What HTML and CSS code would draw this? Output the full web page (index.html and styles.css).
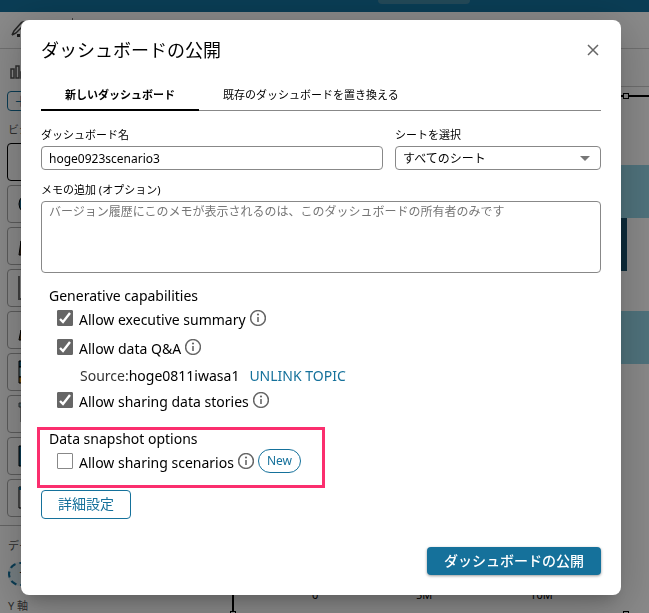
FILE: index.html
```html
<!DOCTYPE html>
<html lang="ja">
  <head>
    <meta charset="UTF-8" />
    <meta name="viewport" content="width=device-width, initial-scale=1.0" />
    <title>ダッシュボードの公開</title>
    <link rel="stylesheet" href="styles.css">
  </head>
  <body>
    <svg class="symbols" aria-hidden="true">
      <symbol id="info" viewBox="0 0 16 16">
        <circle cx="8" cy="8" r="7.4" fill="none" stroke="currentColor" stroke-width="1.5" />
        <path d="M8 7v5" stroke="currentColor" stroke-width="1.6" />
        <circle cx="8" cy="4.5" r="1.1" fill="currentColor" />
      </symbol>
    </svg>

    <div class="app">
      <header class="topbar"><div class="search"></div></header>
      <div class="toolbar">
        <svg class="pen" viewBox="0 0 18 18">
          <path d="M1 14l2-4 7-8q2-2 4 0M1 14l4-2 7-7" fill="none" stroke="#444" stroke-width="1.5" />
          <rect x="6" y="13" width="3" height="3" fill="#333" />
        </svg>
        <span class="separator"></span>
      </div>
      <div class="workspace">
        <aside class="sidebar">
          <svg class="bars" viewBox="0 0 18 14">
            <path d="M2 4h3v9H2z M7 1h3v12H7z M12 7h3v6h-3z" fill="none" stroke="#555" stroke-width="1.5" />
          </svg>
          <div class="add">＋</div>
          <p class="caption">ビジ</p>
          <div class="tiles">
            <div class="tile current"></div>
            <div class="tile"><svg viewBox="0 0 20 24"><circle cx="11" cy="12" r="10" fill="#15719b" stroke="#000" /></svg></div>
            <div class="tile"><svg viewBox="0 0 20 24"><path d="M1 21l2-14v14z" fill="#946337" stroke="#000" /></svg></div>
            <div class="tile"><svg viewBox="0 0 20 24"><path d="M1 0v23h18" fill="none" stroke="#777" stroke-width="2" /></svg></div>
            <div class="tile"><svg viewBox="0 0 20 24"><path d="M1 22l2-10v10z" fill="#d48822" stroke="#000" /></svg></div>
            <div class="tile"><svg viewBox="0 0 20 24"><path d="M1 1h18v6H1z" fill="#1a779f" stroke="#000" /><path d="M1 7h18v10H1z" fill="#ace0ee" stroke="#000" /><path d="M1 17h18v6H1z" fill="#e49b24" stroke="#000" /></svg></div>
            <div class="tile"><svg viewBox="0 0 20 24"><path d="M1 1h5v4H1z M3 5v15" fill="#8bbdcb" stroke="#555" /></svg></div>
            <div class="tile"><svg viewBox="0 0 20 24"><path d="M1 2h18v20H1z" fill="#136c98" stroke="#000" /></svg></div>
            <div class="tile"><svg viewBox="0 0 20 24"><path d="M1 1h18v21H1z" fill="none" stroke="#000" /><path d="M1 1h18v3H1z" fill="#136c98" /></svg></div>
          </div>
          <div class="fields">
            <p class="caption">デー</p>
            <div class="pill">デ</div>
            <p class="caption">Y 軸</p>
          </div>
        </aside>
        <section class="sheet">
          <div class="visual">
            <span class="handle top"></span>
            <div class="bar"></div>
            <div class="bar dark"></div>
            <div class="bar next"></div>
            <div class="axis"><span>0</span><span>5M</span><span>10M</span><span>15M</span></div>
            <span class="handle bottom"></span>
            <span class="handle corner"></span>
          </div>
        </section>
      </div>
    </div>

    <div class="overlay">
      <form class="dialog" role="dialog" aria-labelledby="title">
        <div class="dialog-head">
          <h1 id="title">ダッシュボードの公開</h1>
          <button type="button" class="close" aria-label="閉じる">
            <svg viewBox="0 0 12 12"><path d="M1 1l10 10M11 1L1 11" stroke="#666" stroke-width="1.5" /></svg>
          </button>
        </div>

        <nav class="tabs" role="tablist">
          <button type="button" role="tab" aria-selected="true" class="tab selected">新しいダッシュボード</button>
          <button type="button" role="tab" aria-selected="false" class="tab">既存のダッシュボードを置き換える</button>
        </nav>

        <div class="row">
          <div class="field name">
            <label for="name">ダッシュボード名</label>
            <input type="text" id="name" value="hoge0923scenario3" />
          </div>
          <div class="field sheets">
            <label for="sheets">シートを選択</label>
            <select id="sheets">
              <option>すべてのシート</option>
            </select>
          </div>
        </div>

        <div class="field memo">
          <label for="memo">メモの追加 (オプション)</label>
          <textarea id="memo" placeholder="バージョン履歴にこのメモが表示されるのは、このダッシュボードの所有者のみです"></textarea>
        </div>

        <section class="options">
          <h2>Generative capabilities</h2>
          <div class="option">
            <input type="checkbox" id="summary" checked />
            <label for="summary">Allow executive summary</label>
            <svg class="info"><use href="#info" /></svg>
          </div>
          <div class="option">
            <input type="checkbox" id="qa" checked />
            <label for="qa">Allow data Q&amp;A</label>
            <svg class="info"><use href="#info" /></svg>
          </div>
          <p class="source"><span>Source:</span><b>hoge0811iwasa1</b><a href="#">UNLINK TOPIC</a></p>
          <div class="option">
            <input type="checkbox" id="stories" checked />
            <label for="stories">Allow sharing data stories</label>
            <svg class="info"><use href="#info" /></svg>
          </div>
        </section>

        <section class="options snapshot">
          <h2>Data snapshot options</h2>
          <div class="option">
            <input type="checkbox" id="scenarios" />
            <label for="scenarios">Allow sharing scenarios</label>
            <svg class="info"><use href="#info" /></svg>
            <span class="new">New</span>
          </div>
        </section>

        <button type="button" class="advanced">詳細設定</button>

        <div class="actions">
          <button type="submit" class="publish">ダッシュボードの公開</button>
        </div>
      </form>
    </div>
  </body>
</html>
```
FILE: styles.css
```css
* {
  box-sizing: border-box;
}

body {
  margin: 0;
  color: #000;
  font-family: "Noto Sans", "Noto Sans CJK JP", sans-serif;
  font-size: 14px;
}

h1,
h2,
p {
  margin: 0;
  font-weight: 400;
}

button,
input,
select,
textarea {
  margin: 0;
  font-family: inherit;
  color: inherit;
}

.symbols {
  position: absolute;
  width: 0;
  height: 0;
}

/* page behind the dialog */
.app {
  display: flex;
  flex-direction: column;
  height: 100vh;
  overflow: hidden;
  background: #fff;
}

.topbar {
  display: flex;
  justify-content: center;
  flex: none;
  height: 12px;
  padding-left: 198px;
  background: #13719d;
}

.search {
  width: 92px;
  height: 4px;
  border-radius: 0 0 8px 8px;
  background: #4287a3;
}

.toolbar {
  display: flex;
  flex: none;
  gap: 43px;
  height: 37px;
  padding: 9px 11px;
  border-bottom: 1px solid #d0d0d0;
}

.pen {
  width: 18px;
  height: 18px;
}

.separator {
  width: 1px;
  height: 18px;
  margin-top: -3px;
  background: #777;
}

.workspace {
  display: flex;
  flex: 1;
  min-height: 0;
}

.sidebar {
  flex: none;
  width: 232px;
  padding-top: 16px;
}

.bars {
  display: block;
  width: 18px;
  height: 14px;
  margin-left: 9px;
}

.add {
  width: 80px;
  height: 20px;
  margin: 12px 0 0 7px;
  padding-left: 6px;
  border: 1px solid #13719d;
  border-radius: 4px;
  color: #13719d;
  line-height: 18px;
}

.caption {
  padding-left: 8px;
  color: #555;
  font-size: 11px;
  line-height: 16px;
}

.add + .caption {
  margin: 11px 0 5px;
}

.tiles {
  display: flex;
  flex-direction: column;
  gap: 4px;
  padding: 0 7px 8px;
  border-bottom: 1px solid #bbb;
}

.tile {
  display: flex;
  align-items: center;
  width: 40px;
  height: 38px;
  padding-left: 10px;
  border: 1px solid #aaa;
  border-radius: 4px;
}

.tile.current {
  border-color: #000;
}

.tile svg {
  width: 20px;
  height: 24px;
}

.fields {
  padding-top: 12px;
}

.pill {
  width: 80px;
  height: 24px;
  margin: 8px 0 12px 8px;
  padding-left: 9px;
  border: 2px dashed #13719d;
  border-radius: 12px;
  background: #dcecf3;
  font-size: 12px;
  line-height: 20px;
}

.sheet {
  flex: 1;
  min-width: 0;
  padding-top: 46px;
  background: linear-gradient(#ccc, #ccc) 0 37px / 100% 1px no-repeat;
}

.visual {
  position: relative;
  height: 518px;
  padding-top: 68px;
  border-top: 2px solid #000;
  border-left: 2px solid #000;
}

.bar {
  height: 53px;
  background: #94d5e7;
}

.bar.dark {
  width: calc(100% - 22px);
  background: #18516d;
}

.bar.next {
  margin-top: 40px;
}

.axis {
  display: flex;
  justify-content: space-between;
  margin: 223px -24px 0 0;
  padding-left: 78px;
  font-size: 11px;
  line-height: 16px;
}

.handle {
  position: absolute;
  width: 6px;
  height: 6px;
  border: 1px solid #000;
  background: #fff;
}

.handle.top {
  top: -4px;
  right: 20px;
}

.handle.bottom {
  bottom: -4px;
  left: -4px;
}

.handle.corner {
  right: 20px;
  bottom: -4px;
}

/* dialog */
.overlay {
  position: fixed;
  inset: 0;
  padding: 20px 28px 18px 21px;
  background: rgba(0, 0, 0, 0.46);
}

.dialog {
  display: flex;
  flex-direction: column;
  height: 100%;
  padding: 16px 20px 20px;
  border-radius: 8px;
  background: #fff;
  box-shadow: 0 11px 15px -7px rgba(0, 0, 0, 0.2), 0 9px 46px 8px rgba(0, 0, 0, 0.2);
}

.dialog-head {
  display: flex;
  align-items: center;
  justify-content: space-between;
  height: 28px;
}

h1 {
  font-size: 18px;
  line-height: 28px;
}

.close {
  display: flex;
  padding: 2px;
  border: 0;
  background: none;
}

.close svg {
  width: 12px;
  height: 12px;
}

.tabs {
  display: flex;
  height: 47px;
  padding-top: 14px;
  border-bottom: 1px solid #888;
}

.tab {
  height: 33px;
  padding: 0 24px;
  border: 0;
  border-bottom: 2px solid transparent;
  background: none;
  font-size: 11px;
}

.tab.selected {
  border-color: #000;
  font-weight: 700;
}

.row {
  display: flex;
  gap: 12px;
  margin-top: 16px;
}

.field {
  display: flex;
  flex-direction: column;
  gap: 3px;
}

.field label {
  font-size: 11px;
  line-height: 16px;
}

.field.name {
  flex: 1;
}

.field.sheets {
  width: 206px;
}

.field input,
.field select,
.field textarea {
  width: 100%;
  height: 24px;
  padding: 0 7px;
  border: 1px solid #888;
  border-radius: 4px;
  background: #fff;
  font-size: 12px;
}

.field select {
  appearance: none;
  background: #fff url("data:image/svg+xml,%3Csvg xmlns='http://www.w3.org/2000/svg' viewBox='0 0 10 5'%3E%3Cpath d='M0 0h10L5 5z' fill='%23777'/%3E%3C/svg%3E") right 10px center / 10px 5px no-repeat;
}

.field.memo {
  margin-top: 12px;
}

.field textarea {
  height: 72px;
  padding: 1px 7px;
  line-height: 18px;
  resize: none;
}

.field textarea::placeholder {
  color: #757575;
}

.options {
  margin-top: 13px;
  padding-left: 8px;
}

h2 {
  font-size: 14px;
  line-height: 20px;
}

.option {
  display: flex;
  align-items: center;
  height: 24px;
  padding-left: 8px;
}

.option + .option,
.option + .source {
  margin-top: 5px;
}

.option input {
  appearance: none;
  flex: none;
  width: 16px;
  height: 16px;
  margin-right: 6px;
  border: 1px solid #888;
  border-radius: 1px;
}

.option input:checked {
  border-color: #666;
  background: #666 url("data:image/svg+xml,%3Csvg xmlns='http://www.w3.org/2000/svg' viewBox='0 0 14 14'%3E%3Cpath d='M2 8l3 3 7-9' fill='none' stroke='white' stroke-width='2.4'/%3E%3C/svg%3E") center / 14px 14px no-repeat;
}

.option label {
  padding-top: 3px;
  line-height: 20px;
}

.info {
  width: 16px;
  height: 16px;
  margin-left: 4px;
  color: #666;
  overflow: visible;
}

.source {
  display: flex;
  padding-left: 31px;
  line-height: 24px;
}

.source span {
  color: #333;
}

.source b {
  font-weight: 400;
}

.source a {
  margin-left: 10px;
  color: #15719b;
  text-decoration: none;
}

.snapshot {
  position: relative;
  margin-top: 17px;
}

/* highlight frame around the section */
.snapshot::after {
  content: "";
  position: absolute;
  inset: -2px 276px -15px -4px;
  border: 3px solid #fb2e6e;
  pointer-events: none;
}

.new {
  height: 24px;
  margin-left: 4px;
  padding: 0 8px;
  border: 1px solid #15719b;
  border-radius: 12px;
  color: #15719b;
  font-size: 12px;
  line-height: 22px;
}

.advanced {
  align-self: flex-start;
  height: 29px;
  margin-top: 17px;
  padding: 0 16px 4px;
  border: 1px solid #15719b;
  border-radius: 4px;
  background: #fff;
  color: #15719b;
  font-size: 14px;
}

.actions {
  display: flex;
  justify-content: flex-end;
  margin-top: auto;
}

.publish {
  height: 28px;
  padding: 0 17px 3px;
  border: 0;
  border-radius: 4px;
  background: #15719b;
  box-shadow: 0 1px 3px rgba(0, 0, 0, 0.4);
  color: #fff;
  font-size: 14px;
  font-weight: 500;
}
```
